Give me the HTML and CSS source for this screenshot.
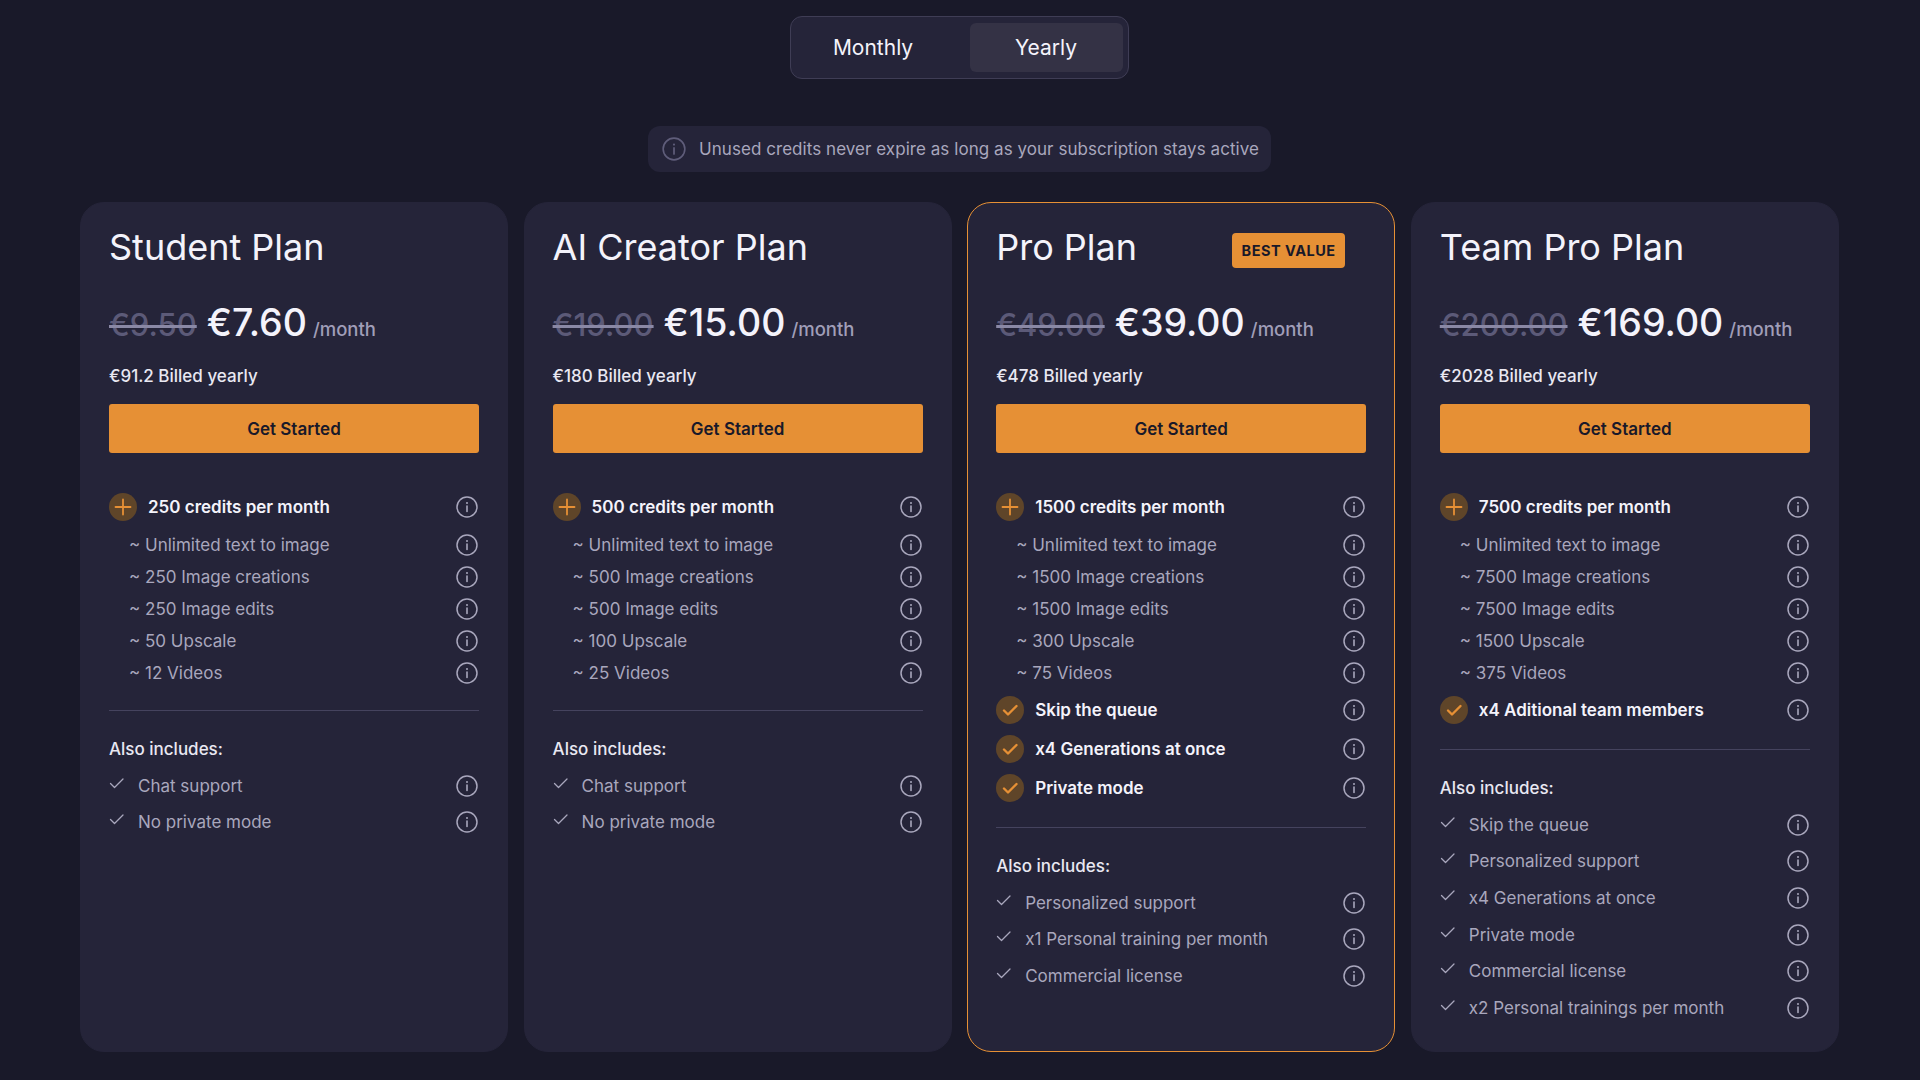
FILE: index.html
```html
<!DOCTYPE html>
<html lang="en">
<head>
    <meta charset="UTF-8">
    <meta name="viewport" content="width=device-width, initial-scale=1.0">
    <title>Pricing</title>
    <link rel="stylesheet" href="styles.css">
</head>
<body>
    <svg class="sprites" width="0" height="0" aria-hidden="true">
        <symbol id="i-info" viewBox="0 0 24 24">
            <circle cx="12" cy="12" r="10" fill="none" stroke="currentColor" stroke-width="1.5"/>
            <path d="M12 11v5.5" fill="none" stroke="currentColor" stroke-width="1.6" stroke-linecap="round"/>
            <circle cx="12" cy="7.9" r="1" fill="currentColor"/>
        </symbol>
        <symbol id="i-plus" viewBox="0 0 28 28">
            <path d="M14 6.5v15M6.5 14h15" fill="none" stroke="currentColor" stroke-width="1.8" stroke-linecap="round"/>
        </symbol>
        <symbol id="i-tick" viewBox="0 0 28 28">
            <path d="M8 14.5l4 4 8.5-8.5" fill="none" stroke="currentColor" stroke-width="2.4" stroke-linecap="round" stroke-linejoin="round"/>
        </symbol>
        <symbol id="i-check" viewBox="0 0 16 16">
            <path d="M1.5 7.5l4 4 8.5-8.5" fill="none" stroke="currentColor" stroke-width="1.3" stroke-linecap="round" stroke-linejoin="round"/>
        </symbol>
    </svg>

    <main class="page">
        <div class="billing-toggle">
            <button class="toggle-option">Monthly</button>
            <button class="toggle-option active">Yearly</button>
        </div>

        <div class="notice">
            <svg class="notice-icon"><use href="#i-info"/></svg>
            <span>Unused credits never expire as long as your subscription stays active</span>
        </div>

        <div class="plans">
            <!-- Student -->
            <section class="plan">
                <div class="plan-head"><h2>Student Plan</h2></div>
                <div class="price"><s>€9.50</s><strong>€7.60</strong><span>/month</span></div>
                <p class="billed">€91.2 Billed yearly</p>
                <button class="cta">Get Started</button>
                <div class="feature main"><span class="badge"><svg><use href="#i-plus"/></svg></span><span class="label">250 credits per month</span><svg class="info"><use href="#i-info"/></svg></div>
                <div class="sub-list">
                    <div class="feature sub"><span class="label">~ Unlimited text to image</span><svg class="info"><use href="#i-info"/></svg></div>
                    <div class="feature sub"><span class="label">~ 250 Image creations</span><svg class="info"><use href="#i-info"/></svg></div>
                    <div class="feature sub"><span class="label">~ 250 Image edits</span><svg class="info"><use href="#i-info"/></svg></div>
                    <div class="feature sub"><span class="label">~ 50 Upscale</span><svg class="info"><use href="#i-info"/></svg></div>
                    <div class="feature sub"><span class="label">~ 12 Videos</span><svg class="info"><use href="#i-info"/></svg></div>
                </div>
                <hr class="divider">
                <h3 class="also">Also includes:</h3>
                <div class="feature extra"><svg class="check"><use href="#i-check"/></svg><span class="label">Chat support</span><svg class="info"><use href="#i-info"/></svg></div>
                <div class="feature extra"><svg class="check"><use href="#i-check"/></svg><span class="label">No private mode</span><svg class="info"><use href="#i-info"/></svg></div>
            </section>

            <!-- AI Creator -->
            <section class="plan">
                <div class="plan-head"><h2>AI Creator Plan</h2></div>
                <div class="price"><s>€19.00</s><strong>€15.00</strong><span>/month</span></div>
                <p class="billed">€180 Billed yearly</p>
                <button class="cta">Get Started</button>
                <div class="feature main"><span class="badge"><svg><use href="#i-plus"/></svg></span><span class="label">500 credits per month</span><svg class="info"><use href="#i-info"/></svg></div>
                <div class="sub-list">
                    <div class="feature sub"><span class="label">~ Unlimited text to image</span><svg class="info"><use href="#i-info"/></svg></div>
                    <div class="feature sub"><span class="label">~ 500 Image creations</span><svg class="info"><use href="#i-info"/></svg></div>
                    <div class="feature sub"><span class="label">~ 500 Image edits</span><svg class="info"><use href="#i-info"/></svg></div>
                    <div class="feature sub"><span class="label">~ 100 Upscale</span><svg class="info"><use href="#i-info"/></svg></div>
                    <div class="feature sub"><span class="label">~ 25 Videos</span><svg class="info"><use href="#i-info"/></svg></div>
                </div>
                <hr class="divider">
                <h3 class="also">Also includes:</h3>
                <div class="feature extra"><svg class="check"><use href="#i-check"/></svg><span class="label">Chat support</span><svg class="info"><use href="#i-info"/></svg></div>
                <div class="feature extra"><svg class="check"><use href="#i-check"/></svg><span class="label">No private mode</span><svg class="info"><use href="#i-info"/></svg></div>
            </section>

            <!-- Pro -->
            <section class="plan featured">
                <div class="plan-head"><h2>Pro Plan</h2><span class="tag">BEST VALUE</span></div>
                <div class="price"><s>€49.00</s><strong>€39.00</strong><span>/month</span></div>
                <p class="billed">€478 Billed yearly</p>
                <button class="cta">Get Started</button>
                <div class="feature main"><span class="badge"><svg><use href="#i-plus"/></svg></span><span class="label">1500 credits per month</span><svg class="info"><use href="#i-info"/></svg></div>
                <div class="sub-list">
                    <div class="feature sub"><span class="label">~ Unlimited text to image</span><svg class="info"><use href="#i-info"/></svg></div>
                    <div class="feature sub"><span class="label">~ 1500 Image creations</span><svg class="info"><use href="#i-info"/></svg></div>
                    <div class="feature sub"><span class="label">~ 1500 Image edits</span><svg class="info"><use href="#i-info"/></svg></div>
                    <div class="feature sub"><span class="label">~ 300 Upscale</span><svg class="info"><use href="#i-info"/></svg></div>
                    <div class="feature sub"><span class="label">~ 75 Videos</span><svg class="info"><use href="#i-info"/></svg></div>
                </div>
                <div class="feature main"><span class="badge"><svg><use href="#i-tick"/></svg></span><span class="label">Skip the queue</span><svg class="info"><use href="#i-info"/></svg></div>
                <div class="feature main"><span class="badge"><svg><use href="#i-tick"/></svg></span><span class="label">x4 Generations at once</span><svg class="info"><use href="#i-info"/></svg></div>
                <div class="feature main"><span class="badge"><svg><use href="#i-tick"/></svg></span><span class="label">Private mode</span><svg class="info"><use href="#i-info"/></svg></div>
                <hr class="divider">
                <h3 class="also">Also includes:</h3>
                <div class="feature extra"><svg class="check"><use href="#i-check"/></svg><span class="label">Personalized support</span><svg class="info"><use href="#i-info"/></svg></div>
                <div class="feature extra"><svg class="check"><use href="#i-check"/></svg><span class="label">x1 Personal training per month</span><svg class="info"><use href="#i-info"/></svg></div>
                <div class="feature extra"><svg class="check"><use href="#i-check"/></svg><span class="label">Commercial license</span><svg class="info"><use href="#i-info"/></svg></div>
            </section>

            <!-- Team Pro -->
            <section class="plan">
                <div class="plan-head"><h2>Team Pro Plan</h2></div>
                <div class="price"><s>€200.00</s><strong>€169.00</strong><span>/month</span></div>
                <p class="billed">€2028 Billed yearly</p>
                <button class="cta">Get Started</button>
                <div class="feature main"><span class="badge"><svg><use href="#i-plus"/></svg></span><span class="label">7500 credits per month</span><svg class="info"><use href="#i-info"/></svg></div>
                <div class="sub-list">
                    <div class="feature sub"><span class="label">~ Unlimited text to image</span><svg class="info"><use href="#i-info"/></svg></div>
                    <div class="feature sub"><span class="label">~ 7500 Image creations</span><svg class="info"><use href="#i-info"/></svg></div>
                    <div class="feature sub"><span class="label">~ 7500 Image edits</span><svg class="info"><use href="#i-info"/></svg></div>
                    <div class="feature sub"><span class="label">~ 1500 Upscale</span><svg class="info"><use href="#i-info"/></svg></div>
                    <div class="feature sub"><span class="label">~ 375 Videos</span><svg class="info"><use href="#i-info"/></svg></div>
                </div>
                <div class="feature main"><span class="badge"><svg><use href="#i-tick"/></svg></span><span class="label">x4 Aditional team members</span><svg class="info"><use href="#i-info"/></svg></div>
                <hr class="divider">
                <h3 class="also">Also includes:</h3>
                <div class="feature extra"><svg class="check"><use href="#i-check"/></svg><span class="label">Skip the queue</span><svg class="info"><use href="#i-info"/></svg></div>
                <div class="feature extra"><svg class="check"><use href="#i-check"/></svg><span class="label">Personalized support</span><svg class="info"><use href="#i-info"/></svg></div>
                <div class="feature extra"><svg class="check"><use href="#i-check"/></svg><span class="label">x4 Generations at once</span><svg class="info"><use href="#i-info"/></svg></div>
                <div class="feature extra"><svg class="check"><use href="#i-check"/></svg><span class="label">Private mode</span><svg class="info"><use href="#i-info"/></svg></div>
                <div class="feature extra"><svg class="check"><use href="#i-check"/></svg><span class="label">Commercial license</span><svg class="info"><use href="#i-info"/></svg></div>
                <div class="feature extra"><svg class="check"><use href="#i-check"/></svg><span class="label">x2 Personal trainings per month</span><svg class="info"><use href="#i-info"/></svg></div>
            </section>
        </div>
    </main>
</body>
</html>
```

FILE: styles.css
```css
body {
    margin: 0;
    background: #191929;
    color: #f4f3fb;
    font-family: Inter, "Liberation Sans", sans-serif;
    overflow: hidden;
}

.sprites {
    position: absolute;
}

.page {
    display: flex;
    flex-direction: column;
    align-items: center;
    padding: 16px 81px 28px 80px;
}

/* Monthly / Yearly */
.billing-toggle {
    display: flex;
    gap: 20px;
    box-sizing: border-box;
    width: 339px;
    height: 63px;
    padding: 6px 5.5px;
    background: #252439;
    border: 1px solid #3f3d55;
    border-radius: 12px;
}

.toggle-option {
    flex: 1;
    border: none;
    border-radius: 6px;
    background: none;
    color: #f4f3fb;
    font-family: inherit;
    font-size: 21px;
    cursor: pointer;
}

.toggle-option.active {
    background: #343245;
}

.notice {
    display: flex;
    align-items: center;
    gap: 12.5px;
    box-sizing: border-box;
    height: 46px;
    margin-top: 47px;
    padding: 0 12px 0 12.5px;
    background: #252439;
    border-radius: 12px;
    color: #a9a7bd;
    font-size: 17px;
    letter-spacing: 0.05px;
}

.notice-icon {
    width: 26px;
    height: 26px;
    color: #5f5d7a;
}

/* Cards */
.plans {
    display: grid;
    grid-template-columns: repeat(4, 428px);
    gap: 15.6px;
    align-self: flex-start;
    margin-top: 30px;
}

.plan {
    box-sizing: border-box;
    height: 850px;
    padding: 21px 28px 0;
    background: #252439;
    border: 1px solid #252439;
    border-radius: 24px;
}

.plan.featured {
    border-color: #e69035;
}

.plan-head {
    display: flex;
    align-items: center;
    justify-content: space-between;
    height: 46px;
}

.plan-head h2 {
    margin: 0;
    font-size: 36px;
    font-weight: 400;
    line-height: 46px;
}

.tag {
    margin: 6px 21px 0 0;
    padding: 0 9.5px;
    background: #e69035;
    border-radius: 4px;
    color: #191929;
    font-size: 14.5px;
    font-weight: 700;
    line-height: 35px;
    letter-spacing: 0.5px;
}

.price {
    display: flex;
    align-items: baseline;
    height: 56px;
    margin-top: 29.5px;
}

.price s {
    color: #5c5a78;
    font-size: 31px;
    font-weight: 500;
    text-decoration-color: #8a88a5;
    text-decoration-thickness: 2.5px;
}

.price strong {
    margin-left: 10px;
    font-size: 37.5px;
    font-weight: 500;
}

.price span {
    margin-left: 6px;
    color: #a09eb8;
    font-size: 18.5px;
    font-weight: 500;
}

.billed {
    margin: 8.8px 0 0;
    font-size: 17px;
    font-weight: 500;
    line-height: 24px;
    color: #e9e8f2;
}

.cta {
    display: block;
    width: 100%;
    height: 49px;
    margin: 16px 0 34px;
    border: none;
    border-radius: 3px;
    background: #e69035;
    color: #191929;
    font-family: inherit;
    font-size: 17px;
    font-weight: 600;
    cursor: pointer;
}

/* Feature rows */
.feature {
    display: flex;
    align-items: center;
}

.feature .label {
    flex: 1;
}

.info {
    flex: none;
    width: 24px;
    height: 24px;
    color: #a9a7bd;
}

.feature.main {
    height: 39px;
    font-size: 17px;
    font-weight: 600;
}

.badge {
    display: block;
    flex: none;
    width: 28px;
    height: 28px;
    margin-right: 11px;
    border-radius: 50%;
    background: #5f4529;
    color: #e69035;
}

.badge svg {
    display: block;
    width: 28px;
    height: 28px;
}

.sub-list {
    margin: 3px 0 1px;
}

.feature.sub {
    height: 32px;
    padding-left: 20px;
    color: #a9a7bd;
    font-size: 17px;
}

.divider {
    height: 1px;
    margin: 20px 0 0;
    border: none;
    background: #45435e;
}

.sub-list + .divider {
    margin-top: 21px;
}

.also {
    margin: 26px 0 6px;
    font-size: 17px;
    font-weight: 500;
    line-height: 24px;
    color: #e9e8f2;
}

.feature.extra {
    height: 36.7px;
    color: #a9a7bd;
    font-size: 17px;
}

.check {
    flex: none;
    width: 16px;
    height: 16px;
    margin: -4px 13px 0 0;
    color: #a9a7bd;
}
```
